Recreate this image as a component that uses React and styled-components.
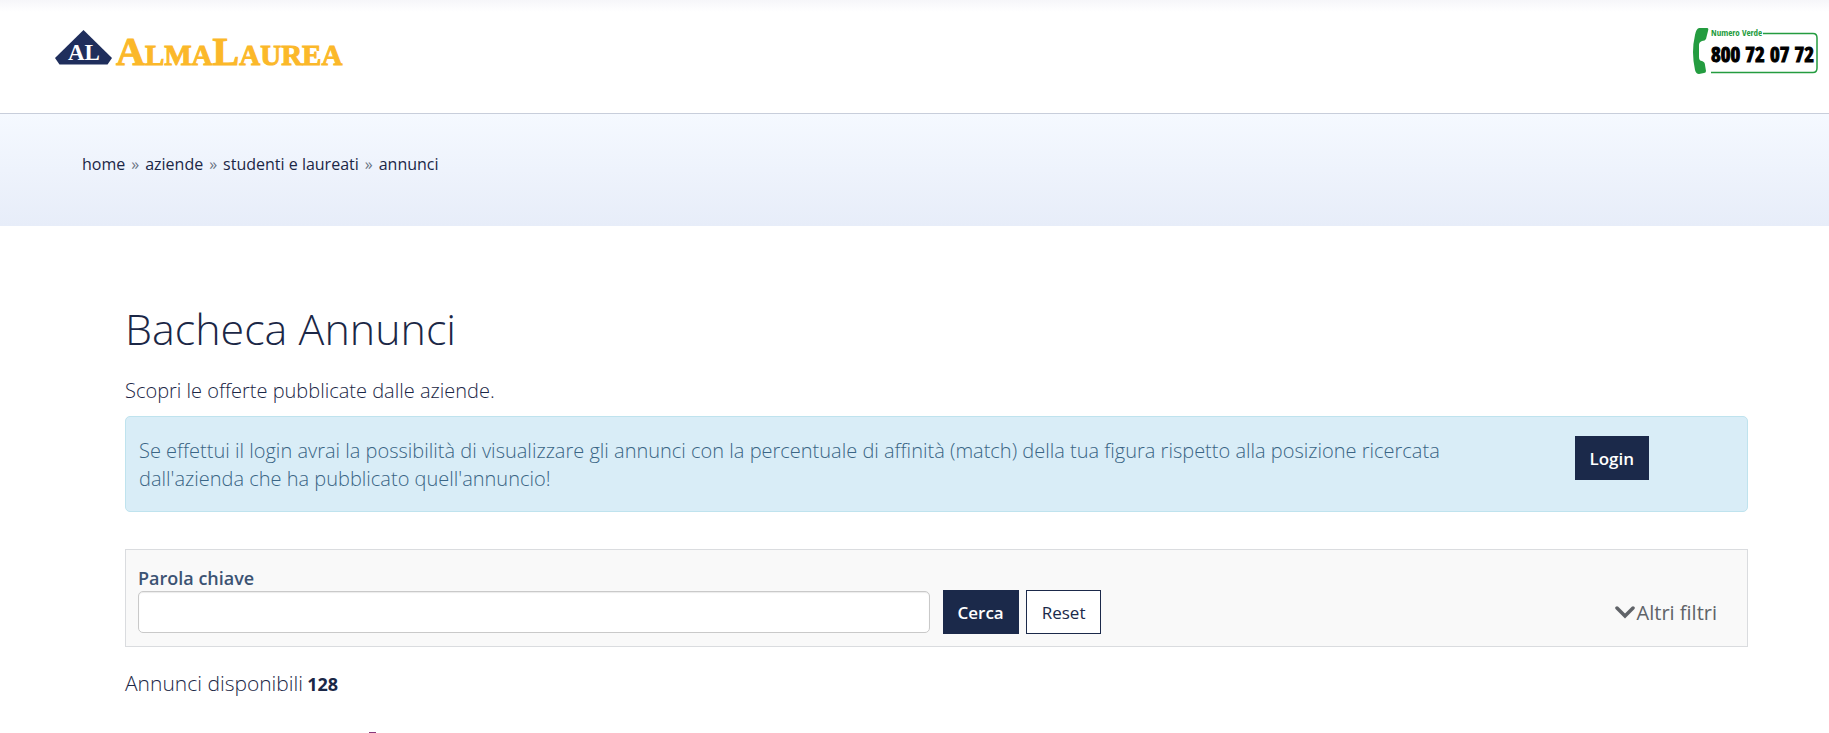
import React from 'react'
import styled, { createGlobalStyle } from 'styled-components'

const crumbs = ['home', 'aziende', 'studenti e laureati', 'annunci']

const App = () => {
  return (
    <Page>
      <GlobalStyle />
      <Header>
        <a href="#home" aria-label="AlmaLaurea">
          <Logo />
        </a>
        <a href="tel:800720772" aria-label="Numero Verde">
          <NumeroVerde />
        </a>
      </Header>

      <Breadcrumb aria-label="breadcrumb">
        <CrumbList>
          {crumbs.map((crumb) => (
            <Crumb key={crumb}>
              <CrumbLink href={`#${crumb}`}>{crumb}</CrumbLink>
            </Crumb>
          ))}
        </CrumbList>
      </Breadcrumb>

      <Content>
        <Title>Bacheca Annunci</Title>
        <Intro>Scopri le offerte pubblicate dalle aziende.</Intro>

        <LoginAlert>
          <AlertText>
            Se effettui il login avrai la possibilità di visualizzare gli annunci con la percentuale
            di affinità (match) della tua figura rispetto alla posizione ricercata dall'azienda che
            ha pubblicato quell'annuncio!
          </AlertText>
          <AlertAction>
            <Button type="button" $primary>Login</Button>
          </AlertAction>
        </LoginAlert>

        <Filters onSubmit={(e) => e.preventDefault()}>
          <Label htmlFor="keyword">Parola chiave</Label>
          <FilterRow>
            <Keyword id="keyword" type="text" />
            <Buttons>
              <Button type="submit" $primary>Cerca</Button>
              <Button type="reset">Reset</Button>
            </Buttons>
            <MoreFilters type="button">
              <Chevron />
              Altri filtri
            </MoreFilters>
          </FilterRow>
        </Filters>

        <Count>
          Annunci disponibili<strong>128</strong>
        </Count>
        <Marker />
      </Content>
    </Page>
  )
}

const Logo = () => (
  <svg width="300" height="60" viewBox="0 -8 300 60" aria-hidden="true">
    <path d="M28.500 2 57 30 52.500 36.500H4.500L0 30Z" fill="#1f2e5c" />
    <g fontFamily="'Liberation Serif', serif" fontWeight="700">
      <text x="13" y="32" fontSize="23" fill="#fff">AL</text>
      <g fill="#fbb829" stroke="#fbb829" strokeWidth="1">
        <text x="61" y="37" fontSize="40">
          A<tspan fontSize="29">LMA</tspan>L<tspan fontSize="29">AUREA</tspan>
        </text>
      </g>
    </g>
  </svg>
)

const NumeroVerde = () => (
  <svg width="128" height="60" viewBox="0 -8 128 60" aria-hidden="true">
    <path
      d="M6 0H14Q16 0 15 3L13 11Q12 13 9 13Q6 14 6 17V29Q6 33 9 33Q12 34 12 37L13 43Q13 45 11 45L6 46Q3 46 2 42Q-2 24 2 7Q3 1 6 0Z"
      fill="#249c40"
    />
    <path d="M70 5.500H120Q124 5.500 124 10V40Q124 44.500 120 44.500H18" fill="none" stroke="#249c40" strokeWidth="1.500" />
    <g fontFamily="'Open Sans Condensed', 'Open Sans', sans-serif" fontWeight="700">
      <text x="18" y="8" fontSize="9" fill="#249c40">Numero Verde</text>
      <text x="18" y="34" fontSize="21" fill="#000" stroke="#000" strokeWidth="1">800 72 07 72</text>
    </g>
  </svg>
)

const Chevron = () => (
  <svg width="20" height="14" viewBox="0 0 20 14" aria-hidden="true">
    <path d="M2 3 10 11 18 3" fill="none" stroke="#606368" strokeWidth="3.500" strokeLinecap="round" />
  </svg>
)

const GlobalStyle = createGlobalStyle`
  * {
    box-sizing: border-box;
  }

  body {
    margin: 0;
    background: #fff;
    color: #1b2746;
    font-family: 'Open Sans', sans-serif;
    font-size: 20px;
    font-weight: 300;
  }

  button,
  input {
    font-family: inherit;
  }
`

const Page = styled.div`
  overflow: hidden;
`

const Header = styled.header`
  display: flex;
  justify-content: space-between;
  align-items: flex-start;
  height: 114px;
  padding: 20px 8px 0 55px;
  border-bottom: 1px solid #c8cedb;
  background: linear-gradient(#f6f6f9, #fff 12px);
`

const Breadcrumb = styled.nav`
  height: 112px;
  padding: 38px 82px;
  background: linear-gradient(#f5f9ff, #e7edf9);
`

const CrumbList = styled.ol`
  display: flex;
  margin: 0;
  padding: 0;
  list-style: none;
  font-size: 16px;
  font-weight: 400;
  line-height: 24px;
`

const Crumb = styled.li`
  & + &::before {
    content: '»';
    padding: 0 6px;
    color: #6c7585;
  }
`

const CrumbLink = styled.a`
  color: #1b2746;
  text-decoration: none;
`

const Content = styled.main`
  padding: 73px 81px 0 125px;
`

const Title = styled.h1`
  margin: 0;
  font-size: 43px;
  font-weight: 300;
  line-height: 60px;
`

const Intro = styled.p`
  margin: 18px 0 11px;
  line-height: 28px;
`

const LoginAlert = styled.section`
  display: flex;
  padding: 19px 13px 18px;
  border: 1px solid #bfe3ee;
  border-radius: 5px;
  background: #d9edf7;
`

const AlertText = styled.p`
  flex: 1;
  margin: 0;
  padding: 1px 80px 0 0;
  color: #3a6585;
  line-height: 28px;
`

const AlertAction = styled.div`
  flex: 0 0 10%;
`

const Button = styled.button`
  height: 44px;
  padding: 0 ${(p) => (p.$primary ? 14 : 15)}px;
  border: 1px solid #1b294a;
  background: ${(p) => (p.$primary ? '#1b294a' : '#fff')};
  color: ${(p) => (p.$primary ? '#fff' : '#1b294a')};
  font-size: 17px;
  font-weight: ${(p) => (p.$primary ? 600 : 400)};
  white-space: nowrap;
`

const Filters = styled.form`
  margin-top: 37px;
  padding: 16px 12px 12px;
  border: 1px solid #dadcdf;
  background: #f9f9f9;
`

const Label = styled.label`
  display: block;
  color: #3c5373;
  font-size: 18px;
  font-weight: 600;
  line-height: 24px;
`

const FilterRow = styled.div`
  display: flex;
  align-items: center;
`

const Keyword = styled.input`
  width: calc(50% - 7px);
  height: 42px;
  padding: 6px 12px;
  border: 1px solid #c9c9c9;
  border-radius: 5px;
  background: #fff;
  box-shadow: inset 0 1px 1px rgba(0, 0, 0, 0.08);
  font-size: 17px;
`

const Buttons = styled.div`
  display: flex;
  gap: 7px;
  margin-left: 13px;
`

const MoreFilters = styled.button`
  display: flex;
  align-items: center;
  gap: 2px;
  margin-left: auto;
  padding: 0 18px;
  border: 0;
  background: none;
  color: #606368;
  font-size: 20px;
  font-weight: 400;
`

const Count = styled.p`
  margin: 21px 0 0;
  font-size: 21px;
  line-height: 30px;

  strong {
    margin-left: 4px;
    font-size: 18px;
    font-weight: 700;
  }
`

const Marker = styled.div`
  width: 7px;
  height: 1px;
  margin: 33px 0 0 244px;
  background: #8a3a7c;
`

export default App
